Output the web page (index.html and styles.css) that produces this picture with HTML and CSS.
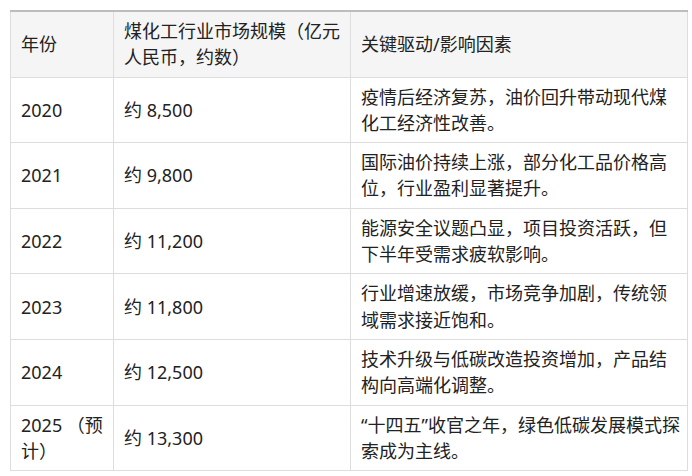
FILE: index.html
```html
<!DOCTYPE html>
<html lang="zh-CN">
<head>
<meta charset="utf-8">
<link rel="stylesheet" href="styles.css">
</head>
<body>
<table class="data">
  <colgroup>
    <col class="c1"><col class="c2"><col class="c3">
  </colgroup>
  <thead>
    <tr><th>年份</th><th>煤化工行业市场规模（亿元人民币，约数）</th><th class="last">关键驱动/影响因素</th></tr>
  </thead>
  <tbody>
    <tr><td>2020</td><td>约 8,500</td><td class="last">疫情后经济复苏，油价回升带动现代煤化工经济性改善。</td></tr>
    <tr><td>2021</td><td>约 9,800</td><td class="last">国际油价持续上涨，部分化工品价格高位，行业盈利显著提升。</td></tr>
    <tr><td>2022</td><td>约 11,200</td><td class="last">能源安全议题凸显，项目投资活跃，但下半年受需求疲软影响。</td></tr>
    <tr><td>2023</td><td>约 11,800</td><td class="last">行业增速放缓，市场竞争加剧，传统领域需求接近饱和。</td></tr>
    <tr><td>2024</td><td>约 12,500</td><td class="last">技术升级与低碳改造投资增加，产品结构向高端化调整。</td></tr>
    <tr><td>2025 （预计）</td><td>约 13,300</td><td class="last">“十四五”收官之年，绿色低碳发展模式探索成为主线。</td></tr>
  </tbody>
</table>
</body>
</html>
```
FILE: styles.css
```css
html, body {
  margin: 0;
  padding: 0;
  background: #ffffff;
}
body {
  padding: 10px;
  font-family: "Noto Sans", "Noto Sans CJK SC", sans-serif;
  font-size: 18px;
  color: #222222;
}
.data {
  border-collapse: collapse;
  table-layout: fixed;
  width: 677px;
  border-top: 2px solid #bdbdbd;
}
.c1 { width: 103px; }
.c2 { width: 237px; }
.c3 { width: 337px; }
.data th,
.data td {
  border: 1px solid #dddddd;
  padding: 6px 10px;
  line-height: 26.3px;
  text-align: left;
  vertical-align: middle;
  font-weight: normal;
}
.data .last {
  padding-right: 4px;
}
.data thead th {
  background: #f5f5f5;
  border-top: 2px solid #bdbdbd;
}
```
